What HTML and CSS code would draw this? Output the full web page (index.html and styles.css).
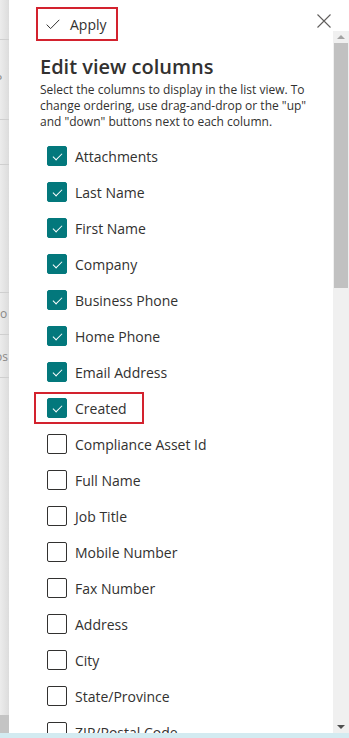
FILE: index.html
```html
<!DOCTYPE html>
<html lang="en">
<head>
  <meta charset="UTF-8">
  <meta name="viewport" content="width=device-width, initial-scale=1.0">
  <title>Edit view columns</title>
  <link rel="stylesheet" href="styles.css">
</head>
<body>
  <div class="screen">
    <div class="backdrop">
      <div class="bd-row" style="height: 40px"></div>
      <div class="bd-row" style="height: 80px"><span class="bd-text">P</span></div>
      <div class="bd-row" style="height: 45px"></div>
      <div class="bd-row" style="height: 128px"></div>
      <div class="bd-row" style="height: 42px"><span class="bd-text">ro</span></div>
      <div class="bd-row" style="height: 43px"><span class="bd-text">os</span></div>
      <div class="bd-row bd-fill"></div>
      <div class="bd-foot"></div>
    </div>

    <div class="panel">
      <div class="main">
        <div class="header">
          <button class="apply">
            <svg width="14" height="11" viewBox="0 0 14 11"><path d="M0.7 5.6 L4.6 9.6 L13.3 0.8" fill="none" stroke="#323130" stroke-width="1"/></svg>
            <span>Apply</span>
          </button>
          <button class="close">
            <svg width="14" height="14" viewBox="0 0 14 14"><path d="M0.5 0.5 L13.5 13.5 M13.5 0.5 L0.5 13.5" stroke="#605e5c" stroke-width="1.1"/></svg>
          </button>
        </div>

        <h1 class="title">Edit view columns</h1>
        <p class="desc">Select the columns to display in the list view. To change ordering, use drag-and-drop or the "up" and "down" buttons next to each column.</p>

        <ul class="columns">
          <li class="col checked"><span class="box"></span>Attachments</li>
          <li class="col checked"><span class="box"></span>Last Name</li>
          <li class="col checked"><span class="box"></span>First Name</li>
          <li class="col checked"><span class="box"></span>Company</li>
          <li class="col checked"><span class="box"></span>Business Phone</li>
          <li class="col checked"><span class="box"></span>Home Phone</li>
          <li class="col checked"><span class="box"></span>Email Address</li>
          <li class="col checked marked"><span class="box"></span>Created</li>
          <li class="col"><span class="box"></span>Compliance Asset Id</li>
          <li class="col"><span class="box"></span>Full Name</li>
          <li class="col"><span class="box"></span>Job Title</li>
          <li class="col"><span class="box"></span>Mobile Number</li>
          <li class="col"><span class="box"></span>Fax Number</li>
          <li class="col"><span class="box"></span>Address</li>
          <li class="col"><span class="box"></span>City</li>
          <li class="col"><span class="box"></span>State/Province</li>
          <li class="col"><span class="box"></span>ZIP/Postal Code</li>
        </ul>
      </div>

      <div class="scrollbar">
        <div class="sb-arrow up"></div>
        <div class="sb-thumb"></div>
        <div class="sb-track"></div>
        <div class="sb-arrow down"></div>
      </div>
    </div>
  </div>
  <div class="taskbar"></div>
</body>
</html>
```

FILE: styles.css
```css
* {
  margin: 0;
  padding: 0;
  box-sizing: border-box;
}

body {
  font-family: 'Open Sans', 'Noto Sans', Arial, sans-serif;
  background-color: #ffffff;
  color: #323130;
  width: 349px;
  height: 738px;
  overflow: hidden;
}

.screen {
  display: flex;
  height: 733px;
  overflow: hidden;
}

/* page behind the panel */
.backdrop {
  width: 9px;
  flex-shrink: 0;
  display: flex;
  flex-direction: column;
  background: linear-gradient(to right, #ececec, #dcdcdc);
  box-shadow: 1px 0 3px rgba(0, 0, 0, 0.15);
  overflow: hidden;
}

.bd-row {
  border-bottom: 1px solid #cfcfcf;
  display: flex;
  align-items: center;
}

.bd-fill {
  flex: 1;
  border-bottom: none;
}

.bd-foot {
  height: 18px;
  background-color: #c4c4c4;
}

.bd-text {
  font-size: 12px;
  color: #8a8886;
  margin-left: -5px;
  white-space: nowrap;
}

.panel {
  flex: 1;
  display: flex;
  background-color: #ffffff;
}

.main {
  flex: 1;
  padding: 0 0 0 27px;
  overflow: hidden;
}

.header {
  display: flex;
  justify-content: space-between;
  align-items: flex-start;
  padding-top: 7px;
  height: 52px;
}

.apply {
  display: flex;
  align-items: center;
  gap: 10px;
  width: 82px;
  height: 34px;
  padding-left: 8px;
  border: 2px solid #d3222e;
  background: none;
  font-family: inherit;
  font-size: 14px;
  color: #323130;
}

.close {
  margin: 7px 2px 0 0;
  width: 14px;
  height: 14px;
  border: none;
  background: none;
  display: flex;
}

.title {
  padding-left: 4px;
  font-size: 20px;
  font-weight: 600;
  line-height: 30px;
  color: #323130;
}

.desc {
  padding-left: 4px;
  max-width: 290px;
  font-size: 12px;
  line-height: 16px;
  color: #323130;
}

.columns {
  list-style: none;
  margin-top: 8px;
}

.col {
  display: flex;
  align-items: center;
  gap: 8px;
  height: 36px;
  padding-left: 11px;
  font-size: 14px;
  white-space: nowrap;
}

.box {
  width: 20px;
  height: 20px;
  border: 1px solid #323130;
  border-radius: 2px;
  position: relative;
}

.col.checked .box {
  background-color: #03787c;
  border-color: #03787c;
}

.col.checked .box::after {
  content: "";
  position: absolute;
  left: 5px;
  top: 3px;
  width: 8px;
  height: 4px;
  border-left: 1.2px solid #ffffff;
  border-bottom: 1.2px solid #ffffff;
  transform: translate(0, 3px) rotate(-45deg);
}

.col.marked {
  margin-left: -2px;
  padding-left: 11px;
  width: 110px;
  height: 32px;
  margin-top: 2px;
  margin-bottom: 2px;
  border: 2px solid #d3222e;
}

.scrollbar {
  width: 16px;
  margin-top: 31px;
  display: flex;
  flex-direction: column;
  background-color: #f0f0f0;
}

.sb-arrow {
  height: 12px;
  display: flex;
  justify-content: center;
  align-items: center;
}

.sb-arrow::before {
  content: "";
  border-left: 4px solid transparent;
  border-right: 4px solid transparent;
}

.sb-arrow.up::before {
  border-bottom: 4px solid #a3a3a3;
}

.sb-arrow.down::before {
  border-top: 4px solid #505050;
}

.sb-thumb {
  height: 245px;
  margin: 0 1px;
  background-color: #c1c1c1;
}

.sb-track {
  flex: 1;
}

.taskbar {
  height: 5px;
  background-color: #d3ebf1;
}
```
